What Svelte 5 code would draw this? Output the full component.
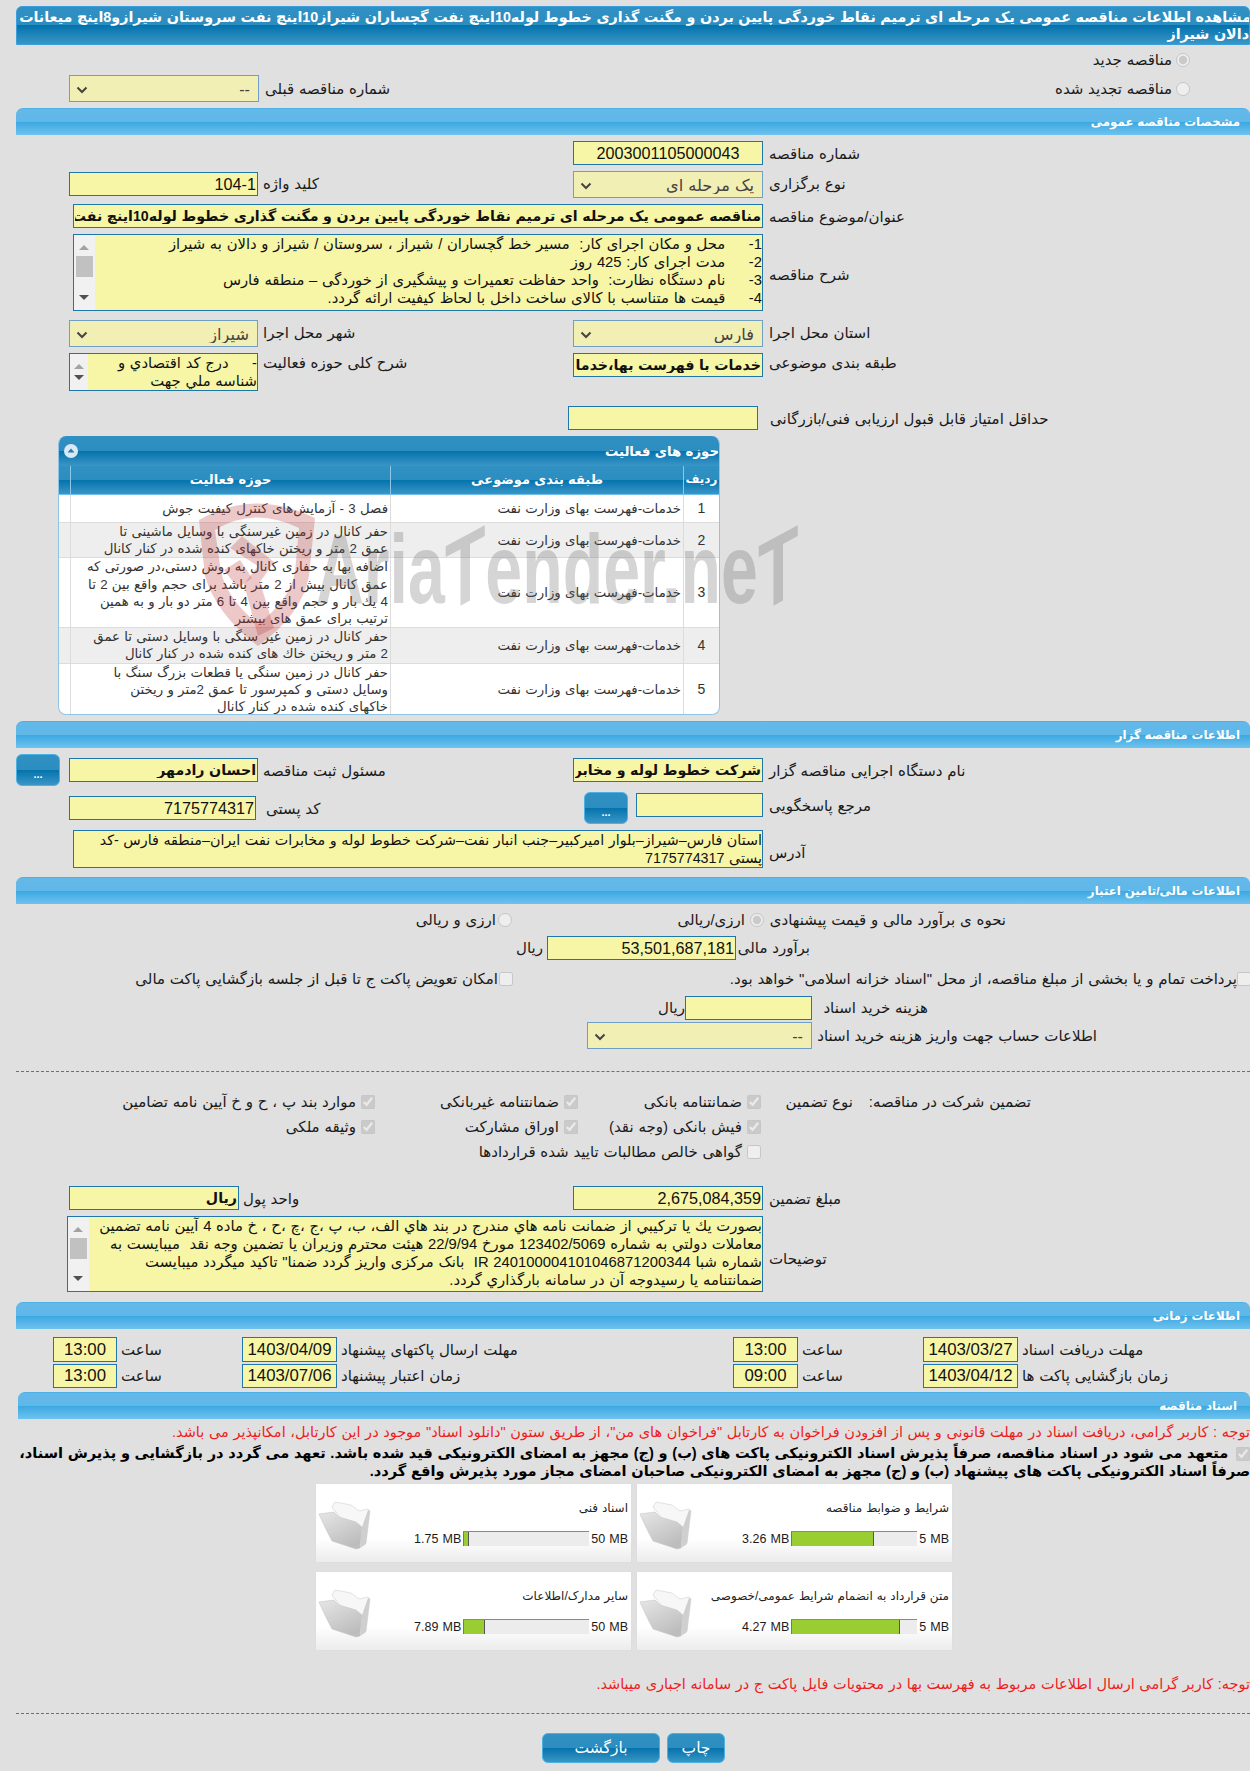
<script>
  const activities = [
    { text: 'فصل 3 - آزمایش‌های کنترل کیفیت جوش' },
    { text: 'حفر کانال در زمین غیرسنگی با وسایل ماشینی تا\nعمق 2 متر و ریختن خاکهای کنده شده در کنار کانال' },
    { text: 'اضافه بها به حفاری کانال به روش دستی،در صورتی که\nعمق کانال بیش از 2 متر باشد برای حجم واقع بین 2 تا\n4 یك بار و حجم واقع بین 4 تا 6 متر دو بار و به همین\nترتیب برای عمق های بیشتر' },
    { text: 'حفر کانال در زمین غیر سنگی با وسایل دستی تا عمق\n2 متر و ریختن خاك های کنده شده در کنار کانال' },
    { text: 'حفر کانال در زمین سنگی یا قطعات بزرگ سنگ با\nوسایل دستی و کمپرسور تا عمق 2متر و ریختن\nخاکهای کنده شده در کنار کانال' }
  ];

  const docs = [
    { title: 'شرایط و ضوابط مناقصه', size: '3.26 MB', max: '5 MB', pct: 66 },
    { title: 'اسناد فنی', size: '1.75 MB', max: '50 MB', pct: 4.8 },
    { title: 'متن قرارداد به انضمام شرایط عمومی/خصوصی', size: '4.27 MB', max: '5 MB', pct: 86 },
    { title: 'سایر مدارک/اطلاعات', size: '7.89 MB', max: '50 MB', pct: 17 }
  ];
</script>

<div class="page">
  <h1 class="title">مشاهده اطلاعات مناقصه عمومی یک مرحله ای ترمیم نقاط خوردگی پایین بردن و مگنت گذاری خطوط لوله10اینچ نفت گچساران شیراز10اینچ نفت سروستان شیرازو8اینچ میعانات<br />دالان شیراز</h1>

  <div class="top">
    <span></span>
    <input type="radio" disabled checked />
    <span class="txt">مناقصه جدید</span>
    <span></span>
    <span></span>
    <span></span>
    <input type="radio" disabled />
    <span class="txt">مناقصه تجدید شده</span>
    <span class="txt prev">شماره مناقصه قبلی</span>
    <select disabled><option>--</option></select>
  </div>

  <div class="bar">مشخصات مناقصه عمومی</div>
  <div class="form general">
    <label>شماره مناقصه</label>
    <input class="center" readonly value="2003001105000043" />
    <span></span>
    <span></span>
    <label>نوع برگزاری</label>
    <select disabled><option>یک مرحله ای</option></select>
    <label class="left">کلید واژه</label>
    <input class="nudge" readonly value="104-1" />
    <label>عنوان/موضوع مناقصه</label>
    <input class="wide strong" readonly value="مناقصه عمومی یک مرحله ای ترمیم نقاط خوردگی پایین بردن و مگنت گذاری خطوط لوله10اینچ نفت گچساران شیراز10اینچ نفت سروستان شیرازو8اینچ میعانات دالان شیراز" />
    <label class="mid">شرح مناقصه</label>
    <div class="scrollbox wide desc">
      <div class="text">1-     محل و مکان اجرای کار:  مسیر خط گچساران / شیراز ، سروستان / شیراز و دالان به شیراز
2-     مدت اجرای کار: 425 روز
3-     نام دستگاه نظارت:  واحد حفاظت تعمیرات و پیشگیری از خوردگی – منطقه فارس
4-     قیمت ها متناسب با کالای ساخت داخل با لحاظ کیفیت ارائه گردد.
5-</div>
      <div class="sb"><i class="up"></i><b></b><i class="down"></i></div>
    </div>
    <label>استان محل اجرا</label>
    <select disabled><option>فارس</option></select>
    <label class="left">شهر محل اجرا</label>
    <select disabled><option>شیراز</option></select>
    <label class="high">طبقه بندی موضوعی</label>
    <input class="strong" readonly value="خدمات با فهرست بها،خدمات با فهرست بها" />
    <label class="left high">شرح کلی حوزه فعالیت</label>
    <div class="scrollbox small">
      <div class="text">-     درج کد اقتصادي و
شناسه ملي جهت</div>
      <div class="sb"><i class="up"></i><i class="down"></i></div>
    </div>
    <label class="score">حداقل امتیاز قابل قبول ارزیابی فنی/بازرگانی</label>
    <input class="shifted" readonly />
  </div>

  <section class="panel">
    <div class="panel-head">
      <span>حوزه های فعالیت</span>
      <span class="collapse"><svg width="14" height="14" viewBox="0 0 14 14"><circle cx="7" cy="7" r="7" fill="#dbe9f2" /><path d="M3.5 8.5 7 4.5l3.5 4z" fill="#1f7fb2" /></svg></span>
    </div>
    <table>
      <thead>
        <tr>
          <th class="c-num">ردیف</th>
          <th class="c-sub">طبقه بندی موضوعی</th>
          <th class="c-act">حوزه فعالیت</th>
          <th class="c-pad"></th>
        </tr>
      </thead>
      <tbody>
        {#each activities as row, i}
          <tr class:even={i % 2 === 1}>
            <td class="num">{i + 1}</td>
            <td>خدمات-فهرست بهای وزارت نفت</td>
            <td class="act">{row.text}</td>
            <td></td>
          </tr>
        {/each}
      </tbody>
    </table>
  </section>

  <div class="bar">اطلاعات مناقصه گزار</div>
  <div class="form tenderer">
    <label>نام دستگاه اجرایی مناقصه گزار</label>
    <input class="strong" readonly value="شرکت خطوط لوله و مخابرات نفت ایران منطقه فارس" />
    <label class="left">مسئول ثبت مناقصه</label>
    <input class="strong" readonly value="احسان رادمهر" />
    <button class="more first">...</button>
    <label>مرجع پاسخگویی</label>
    <div class="ref">
      <input readonly />
      <button class="more">...</button>
    </div>
    <label class="left zip">کد پستی</label>
    <input class="narrow" readonly value="7175774317" />
    <span></span>
    <label class="mid-addr">آدرس</label>
    <div class="address wide">استان فارس–شیراز–بلوار امیرکبیر–جنب انبار نفت–شرکت خطوط لوله و مخابرات نفت ایران–منطقه فارس -کد<br />پستی 7175774317</div>
  </div>

  <div class="bar">اطلاعات مالی/تامین اعتبار</div>
  <div class="finance">
    <div class="line method">
      <span></span>
      <span class="txt">نحوه ی برآورد مالی و قیمت پیشنهادی</span>
      <input type="radio" disabled checked />
      <span class="txt">ارزی/ریالی</span>
      <input type="radio" disabled />
      <span class="txt">ارزی و ریالی</span>
    </div>
    <div class="line estimate">
      <span></span>
      <span class="txt">برآورد مالی</span>
      <input readonly value="53,501,687,181" />
      <span class="txt unit">ریال</span>
    </div>
    <div class="line treasury">
      <input type="checkbox" disabled />
      <span class="txt">پرداخت تمام و یا بخشی از مبلغ مناقصه، از محل "اسناد خزانه اسلامی" خواهد بود.</span>
      <input type="checkbox" disabled />
      <span class="txt">امکان تعویض پاکت ج تا قبل از جلسه بازگشایی پاکت مالی</span>
    </div>
    <div class="line fee">
      <span></span>
      <span class="txt">هزینه خرید اسناد</span>
      <input readonly />
      <span class="txt">ریال</span>
    </div>
    <div class="line account">
      <span></span>
      <span class="txt">اطلاعات حساب جهت واریز هزینه خرید اسناد</span>
      <select disabled><option>--</option></select>
    </div>
  </div>

  <hr class="dash first-dash" />

  <div class="guarantee">
    <span></span>
    <span class="txt">تضمین شرکت در مناقصه:</span>
    <span class="txt">نوع تضمین</span>
    <input type="checkbox" disabled checked />
    <span class="txt">ضمانتنامه بانکی</span>
    <input type="checkbox" disabled checked />
    <span class="txt">ضمانتنامه غیربانکی</span>
    <input type="checkbox" disabled checked />
    <span class="txt">موارد بند پ ، ح و خ آیین نامه تضامین</span>

    <span></span><span></span><span></span>
    <input type="checkbox" disabled checked />
    <span class="txt">فیش بانکی (وجه نقد)</span>
    <input type="checkbox" disabled checked />
    <span class="txt">اوراق مشارکت</span>
    <input type="checkbox" disabled checked />
    <span class="txt">وثیقه ملکی</span>

    <span></span><span></span><span></span>
    <input type="checkbox" disabled />
    <span class="txt">گواهی خالص مطالبات تایید شده قراردادها</span>
  </div>

  <div class="form amount">
    <label>مبلغ تضمین</label>
    <input readonly value="2,675,084,359" />
    <label class="left unit-label">واحد پول</label>
    <input class="currency strong" readonly value="ریال" />
    <label class="mid-note">توضیحات</label>
    <div class="scrollbox note">
      <div class="text">بصورت يك يا تركيبي از ضمانت نامه هاي مندرج در بند هاي الف، ب، پ ،ج ،چ ،ح ، خ ماده 4 آيين نامه تضمين
معاملات دولتي به شماره 123402/5069 مورخ 22/9/94 هيئت محترم وزيران يا تضمين وجه نقد  ميبايست به
شماره شبا IR 240100004101046871200344  بانک مرکزی واریز گردد ضمنا" تاکید میگردد میبایست
ضمانتنامه يا رسيدوجه آن در سامانه بارگذاري گردد.</div>
      <div class="sb"><i class="up"></i><b></b><i class="down"></i></div>
    </div>
  </div>

  <div class="bar">اطلاعات زمانی</div>
  <div class="times">
    <span></span>
    <span class="txt">مهلت دریافت اسناد</span>
    <input readonly value="1403/03/27" />
    <span class="txt">ساعت</span>
    <input readonly value="13:00" />
    <span></span>
    <span class="txt">مهلت ارسال پاکتهای پیشنهاد</span>
    <input readonly value="1403/04/09" />
    <span class="txt">ساعت</span>
    <input readonly value="13:00" />

    <span></span>
    <span class="txt">زمان بازگشایی پاکت ها</span>
    <input readonly value="1403/04/12" />
    <span class="txt">ساعت</span>
    <input readonly value="09:00" />
    <span></span>
    <span class="txt">زمان اعتبار پیشنهاد</span>
    <input readonly value="1403/07/06" />
    <span class="txt">ساعت</span>
    <input readonly value="13:00" />
  </div>

  <div class="bar docs-bar">اسناد مناقصه</div>
  <p class="red first-red">توجه : کاربر گرامی، دریافت اسناد در مهلت قانونی و پس از افزودن فراخوان به کارتابل "فراخوان های من"، از طریق ستون "دانلود اسناد" موجود در این کارتابل، امکانپذیر می باشد.</p>
  <p class="pledge"><input type="checkbox" disabled checked /> متعهد می شود در اسناد مناقصه، صرفاً پذیرش اسناد الکترونیکی پاکت های (ب) و (ج) مجهز به امضای الکترونیکی قید شده باشد. تعهد می گردد در بازگشایی و پذیرش اسناد،<br />صرفاً اسناد الکترونیکی پاکت های پیشنهاد (ب) و (ج) مجهز به امضای الکترونیکی صاحبان امضای مجاز مورد پذیرش واقع گردد.</p>

  <div class="cards">
    {#each docs as doc}
      <div class="card">
        <div class="card-title">{doc.title}</div>
        <div class="meter">
          <span>{doc.max}</span>
          <div class="track"><div class="fill" style="width: {doc.pct}%"></div></div>
          <span>{doc.size}</span>
        </div>
        <svg class="folder" width="54" height="50" viewBox="0 0 54 50">
          <defs>
            <linearGradient id="fold" x1="0" y1="0" x2="0.6" y2="1">
              <stop offset="0" stop-color="#e6e6e6" />
              <stop offset="1" stop-color="#bdbdbd" />
            </linearGradient>
          </defs>
          <path d="M14 7 17 2l16 3 8 6 9-2 2 2-4 32-3 3z" fill="#f7f7f7" stroke="#e2e2e2" />
          <path d="M1 14 16 12l5 5 17 5 6 5-2 21-4 1-24-8Q8 30 1 14z" fill="url(#fold)" stroke="#c8c8c8" stroke-width=".6" />
          <path d="M44 27 50 10l2 1-4 33-6 4z" fill="#cfcfcf" />
        </svg>
      </div>
    {/each}
  </div>

  <p class="red second-red">توجه: کاربر گرامی ارسال اطلاعات مربوط به فهرست بها در محتویات فایل پاکت ج در سامانه اجباری میباشد.</p>

  <hr class="dash second-dash" />

  <div class="actions">
    <button class="action print">چاپ</button>
    <button class="action back">بازگشت</button>
  </div>

  <div class="watermark">
    <svg class="pin" width="120" height="146" viewBox="0 0 120 146">
      <path fill-rule="evenodd" d="M1 20Q56-12 117 18L111 76Q104 114 60 146 18 114 7 76zM17 30 23 72Q30 100 60 124 92 100 97 72L101 28Q56 6 17 30z" fill="rgba(190,50,50,.27)" />
      <path d="M32 48 44 36 76 62 62 82 76 128 60 136 46 84 60 66z" fill="rgba(190,50,50,.27)" />
      <path d="M26 70 42 60 54 78 40 88z" fill="rgba(190,50,50,.27)" />
    </svg>
    <span class="mark">Aria<em>T</em>ender.ne<em>T</em></span>
  </div>
</div>

<style>
  :global(html) {
    overflow-x: hidden;
  }

  :global(body) {
    margin: 0;
    background: #e0e0e0;
  }

  .page {
    position: relative;
    box-sizing: border-box;
    width: 1250px;
    height: 1771px;
    padding: 6px 0 0 16px;
    overflow: hidden;
    direction: rtl;
    font-family: "Liberation Sans", "DejaVu Sans", sans-serif;
    font-size: 15px;
    word-spacing: 0.04em;
    color: #1a1a1a;
  }

  .title {
    box-sizing: border-box;
    height: 39px;
    margin: 0;
    padding: 2px 0 0;
    border: 1px solid #3a9fdc;
    border-radius: 6px 6px 0 0;
    background: linear-gradient(#3090c2, #2c8dc0 50%, #0472ac 50%, #3a96c6);
    color: #fff;
    font-size: 14.3px;
    font-weight: bold;
    line-height: 17px;
    white-space: nowrap;
    overflow: hidden;
    text-indent: -2px;
  }

  .bar {
    box-sizing: border-box;
    height: 27px;
    padding: 4px 10px 0 0;
    border-radius: 7px 7px 0 0;
    border-top: 1px solid #4fb0e6;
    background: linear-gradient(#63b9e8, #60b8e8 48%, #3ba8e2 50%, #6fc2ee);
    color: #fff;
    font-size: 11.8px;
    font-weight: bold;
    line-height: 18px;
  }

  input:not([type]),
  select,
  .address {
    box-sizing: border-box;
    display: block;
    width: 100%;
    height: 24px;
    margin: 0;
    padding: 0 1px;
    border: 1px solid #1f76ac;
    border-radius: 0;
    background: #f7f6a6;
    color: #111;
    font-family: inherit;
    font-size: 16.2px;
    word-spacing: inherit;
    outline: none;
    direction: rtl;
  }

  input.center {
    text-align: center;
  }

  input.strong {
    font-weight: bold;
    font-size: 14.2px;
  }

  select {
    height: 27px;
    padding: 0 8px 0 0;
    border-color: #6f9fc4;
    background: #f2efb4 url("data:image/svg+xml,%3Csvg xmlns='http://www.w3.org/2000/svg' width='12' height='8'%3E%3Cpath d='M1.5 1.5 6 6l4.5-4.5' fill='none' stroke='%23444' stroke-width='2'/%3E%3C/svg%3E") no-repeat 6px 10px;
    color: #444;
    opacity: 1;
    appearance: none;
  }

  input[type='radio'],
  input[type='checkbox'] {
    width: 14px;
    height: 14px;
    margin: 0;
    justify-self: center;
  }

  .txt,
  label {
    white-space: nowrap;
  }

  .top {
    display: grid;
    grid-template-columns: 59px 16px 785px 131px 190px;
    grid-template-rows: 30px 27px;
    height: 57px;
    margin: 0 0 6px;
    align-items: center;
  }

  .top .txt {
    padding-right: 3px;
  }

  .top .prev {
    justify-self: end;
    padding: 0 0 0 6px;
  }

  .form {
    display: grid;
    grid-template-columns: 487px 190px 315px 189px;
    align-items: start;
  }

  .form label {
    justify-self: end;
    padding: 2px 0 0 6px;
    line-height: 22px;
  }

  .form label.left {
    padding-left: 5px;
  }

  .form label.high {
    padding-top: 0;
    line-height: 20px;
  }

  .general {
    grid-template-rows: 30px 33px 30px 86px 33px 53px 24px;
    padding: 6px 0;
  }

  .general .nudge {
    margin-top: 1px;
  }

  .general .wide,
  .tenderer .wide {
    grid-column: 2 / 5;
    width: 690px;
  }

  .general label.mid {
    line-height: 78px;
  }

  .general label.score {
    padding-left: 7px;
  }

  .general input.shifted {
    width: 190px;
    margin-right: 5px;
  }

  .scrollbox {
    box-sizing: border-box;
    display: flex;
    border: 1px solid #1f76ac;
    background: #f7f6a6;
    overflow: hidden;
  }

  .text {
    flex: 1;
    padding: 0 0 0 1px;
    overflow: hidden;
    color: #111;
    font-size: 14.8px;
    line-height: 18px;
    white-space: pre;
  }

  .sb {
    position: relative;
    flex: none;
    width: 21px;
    background: #f1f1f1;
  }

  .sb i {
    position: absolute;
    left: 5px;
    width: 0;
    height: 0;
    border: 5px solid transparent;
    border-top: 0;
    border-bottom: 5px solid #a3a3a3;
  }

  .sb i.up {
    top: 10px;
  }

  .sb i.down {
    bottom: 10px;
    border-top: 5px solid #505050;
    border-bottom: 0;
  }

  .sb b {
    position: absolute;
    top: 21px;
    left: 2px;
    width: 17px;
    height: 21px;
    background: #c1c1c1;
  }

  .desc {
    height: 77px;
  }

  .small {
    height: 38px;
  }

  .small .sb {
    width: 18px;
  }

  .small .sb i {
    left: 4px;
  }

  .panel {
    box-sizing: border-box;
    width: 662px;
    height: 279px;
    margin: 0 auto 6px 42px;
    border-radius: 8px;
    background: #fff;
    border: 1px solid #8fc4e4;
    border-top: 0;
    overflow: hidden;
  }

  .panel-head {
    display: flex;
    align-items: center;
    justify-content: space-between;
    height: 30px;
    padding: 0 0 0 5px;
    background: linear-gradient(#3090c2, #2c8dc0 50%, #0472ac 50%, #3a96c6);
    color: #fff;
    font-size: 13.3px;
    font-weight: bold;
  }

  .collapse {
    display: flex;
  }

  table {
    width: 660px;
    border-collapse: collapse;
    table-layout: fixed;
    font-size: 13.3px;
    line-height: 17.2px;
  }

  th {
    height: 28px;
    padding: 0;
    border-left: 1px solid #8cc8e8;
    border-bottom: 1px solid #6fc0ec;
    background: linear-gradient(#3090c2, #2c8dc0 50%, #0472ac 50%, #3a96c6);
    color: #fff;
    font-size: 13px;
    font-weight: bold;
  }

  th.c-num {
    width: 35px;
    font-size: 12px;
  }

  th.c-sub {
    width: 292px;
  }

  th.c-act {
    width: 319px;
  }

  td {
    padding: 0 2px;
    border-left: 1px solid #dcdcdc;
    border-bottom: 1px solid #dcdcdc;
    text-align: right;
    vertical-align: middle;
    color: #333;
  }

  td.act {
    white-space: pre-line;
  }

  td.num {
    text-align: center;
    font-size: 14px;
  }

  tbody tr:first-child td {
    height: 27px;
  }

  tr.even td {
    background: #eee;
  }

  th:last-child,
  td:last-child {
    border-left: 0;
  }

  .tenderer {
    grid-template-columns: 487px 190px 315px 189px 53px;
    grid-template-rows: 35px 37px 38px;
    padding: 10px 0 9px;
  }

  .first {
    justify-self: end;
    margin-top: -4px;
  }

  .more {
    box-sizing: border-box;
    display: block;
    width: 44px;
    height: 32px;
    padding: 8px 0 0;
    border: 1px solid #4bb0e2;
    border-radius: 6px;
    background: linear-gradient(#3090c2, #2c8dc0 50%, #0472ac 50%, #3a96c6);
    color: #fff;
    font-family: inherit;
    font-size: 11px;
    font-weight: bold;
    line-height: 12px;
  }

  .ref {
    display: flex;
    gap: 8px;
  }

  .ref input {
    width: 127px;
  }

  .ref .more {
    flex: none;
    margin-top: -1px;
  }

  .tenderer label.zip {
    padding: 5px 0 0 8px;
  }

  .tenderer .narrow {
    width: 187px;
    margin: 3px 2px 0 0;
  }

  .address {
    height: 38px;
    padding: 0;
    line-height: 18px;
    font-size: 14.3px;
    white-space: nowrap;
    overflow: hidden;
  }

  .form label.mid-addr {
    line-height: 42px;
  }

  .finance {
    padding-top: 5px;
  }

  .line {
    display: grid;
    align-items: center;
  }

  .method {
    height: 22px;
    grid-template-columns: 244px 237px 24px 231px 16px 1fr;
    margin-bottom: 5px;
  }

  .method input:nth-child(5) {
    justify-self: end;
  }

  .method .txt:nth-child(6) {
    padding-right: 2px;
  }

  .estimate {
    grid-template-columns: 440px 74px 189px 1fr;
    height: 24px;
    margin-bottom: 8px;
  }

  .estimate .unit {
    padding-right: 4px;
  }

  .treasury {
    grid-template-columns: 13px 723px 16px 1fr;
    height: 22px;
    margin-bottom: 6px;
  }

  .treasury input:first-child {
    justify-self: start;
    margin-right: -1px;
  }

  .fee {
    grid-template-columns: 322px 116px 127px 1fr;
    height: 24px;
    margin-bottom: 2px;
  }

  .account {
    grid-template-columns: 153px 285px 225px;
    height: 27px;
  }

  .dash {
    height: 0;
    margin: 0;
    border: 0;
    border-top: 1px dashed #2f82b4;
  }

  .first-dash {
    margin: 22px 0 18px;
  }

  .guarantee {
    display: grid;
    grid-template-columns: 219px 178px 91px 16px 167px 16px 187px 16px 1fr;
    grid-template-rows: 24px 26px 24px;
    align-items: center;
  }

  .guarantee input + .txt {
    padding-right: 4px;
  }

  .amount {
    grid-template-rows: 30px 76px;
    padding: 22px 0 10px;
  }

  .amount .currency {
    width: 170px;
    justify-self: end;
  }

  .form label.unit-label {
    margin-left: -19px;
    padding-left: 4px;
  }

  .amount .mid-note {
    line-height: 82px;
  }

  .note {
    grid-column: 2 / 5;
    width: 696px;
    height: 76px;
  }

  .times {
    display: grid;
    grid-template-columns: 108px 124px 95px 125px 65px 208px 188px 95px 125px 64px;
    grid-template-rows: 25px 24px;
    row-gap: 2px;
    align-items: center;
    padding-top: 8px;
    height: 51px;
    margin-bottom: 4px;
  }

  .times input {
    height: 100%;
    padding: 0;
    text-align: center;
    font-size: 16.8px;
  }

  .times .txt {
    justify-self: end;
    padding-left: 4px;
  }

  .docs-bar {
    margin-left: 2px;
    padding-right: 13px;
  }

  .red {
    margin: 0;
    color: #f01c1c;
    white-space: nowrap;
    font-size: 14.5px;
  }

  .first-red {
    height: 22px;
    line-height: 26px;
  }

  .pledge {
    box-sizing: border-box;
    height: 42px;
    margin: 0;
    padding-top: 3px;
    color: #000;
    font-size: 14.6px;
    font-weight: bold;
    line-height: 18px;
    white-space: nowrap;
  }

  .pledge input {
    vertical-align: middle;
    margin-left: 3px;
  }

  .cards {
    display: grid;
    grid-template-columns: 317px 317px;
    grid-auto-rows: 80px;
    gap: 8px 4px;
    margin: 0 297px 0 0;
  }

  .card {
    position: relative;
    box-sizing: border-box;
    border: 1px solid #dedede;
    background: linear-gradient(#fff 70%, #ececec);
  }

  .card-title {
    padding: 17px 3px 0 0;
    font-size: 12px;
    color: #222;
    white-space: nowrap;
  }

  .meter {
    position: absolute;
    top: 47px;
    right: 3px;
    display: flex;
    align-items: center;
    gap: 2px;
    font-size: 12.5px;
    white-space: nowrap;
  }

  .meter span {
    direction: ltr;
    unicode-bidi: isolate;
  }

  .track {
    width: 126px;
    height: 14px;
    border-top: 1px solid #8a8a8a;
    background: #ececec;
    direction: ltr;
  }

  .fill {
    box-sizing: border-box;
    height: 100%;
    border-left: 1px solid #777;
    border-right: 1px solid #555;
    background: #9acd32;
  }

  .folder {
    position: absolute;
    left: 2px;
    top: 16px;
  }

  .second-red {
    height: 20px;
    margin-top: 23px;
    line-height: 20px;
  }

  .second-dash {
    margin-top: 19px;
  }

  .actions {
    display: flex;
    gap: 7px;
    margin: 19px 525px 0 0;
  }

  .action {
    box-sizing: border-box;
    height: 30px;
    border: 1px solid #4bb0e2;
    border-radius: 6px;
    background: linear-gradient(#3090c2, #2c8dc0 50%, #0472ac 50%, #3a96c6);
    color: #fff;
    font-family: inherit;
    font-size: 15.5px;
  }

  .print {
    width: 58px;
  }

  .back {
    width: 118px;
  }

  .watermark {
    position: absolute;
    inset: 0;
    direction: ltr;
    pointer-events: none;
  }

  .pin {
    position: absolute;
    left: 198px;
    top: 500px;
  }

  .mark {
    position: absolute;
    left: 316px;
    top: 509px;
    font-family: "Liberation Sans", sans-serif;
    font-size: 98px;
    font-weight: bold;
    line-height: 120px;
    word-spacing: 0;
    color: rgba(100, 100, 100, 0.27);
    white-space: nowrap;
    transform: scaleX(0.676);
    transform-origin: 0 0;
  }

  .mark em {
    display: inline-block;
    font-style: normal;
    transform: skewY(-20deg);
  }
</style>
